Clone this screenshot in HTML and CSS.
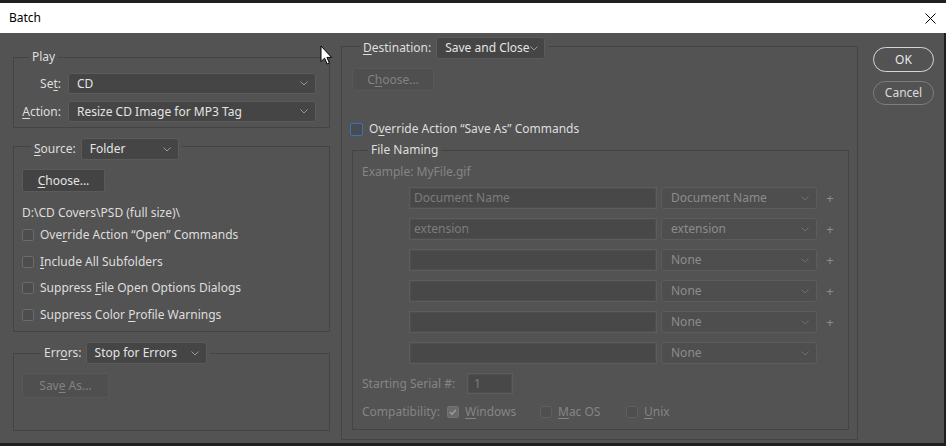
FILE: index.html
```html
<!DOCTYPE html>
<html>
<head>
<meta charset="utf-8">
<link rel="stylesheet" href="styles.css">
</head>
<body>
<div class="topstrip"></div>
<div class="titlebar">
  <span class="title">Batch</span>
  <svg class="close" width="11" height="11" viewBox="0 0 11 11"><path d="M0.5 0.5 L10.5 10.5 M10.5 0.5 L0.5 10.5"/></svg>
</div>
<div class="main">
  <div class="col-left">
    <fieldset class="group play">
      <legend class="lg-play">Play</legend>
      <div class="playgrid">
        <span class="lbl">Se<u>t</u>:</span>
        <div class="select w-play"><span>CD</span><svg class="chev" width="8" height="5" viewBox="0 0 8 5"><path d="M0.5 0.5 L4 4 L7.5 0.5"/></svg></div>
        <span class="lbl"><u>A</u>ction:</span>
        <div class="select w-play"><span>Resize CD Image for MP3 Tag</span><svg class="chev" width="8" height="5" viewBox="0 0 8 5"><path d="M0.5 0.5 L4 4 L7.5 0.5"/></svg></div>
      </div>
    </fieldset>

    <fieldset class="group source">
      <legend class="lg-source"><span class="lg-lbl"><u>S</u>ource:</span><div class="select w-source"><span>Folder</span><svg class="chev" width="8" height="5" viewBox="0 0 8 5"><path d="M0.5 0.5 L4 4 L7.5 0.5"/></svg></div></legend>
      <div class="btn w-choose"><span><u>C</u>hoose...</span></div>
      <div class="path">D:\CD Covers\PSD (full size)\</div>
      <div class="chk-row r1"><span class="cb"></span><span>Ove<u>r</u>ride Action “Open” Commands</span></div>
      <div class="chk-row r2"><span class="cb"></span><span><u>I</u>nclude All Subfolders</span></div>
      <div class="chk-row r3"><span class="cb"></span><span>Suppress <u>F</u>ile Open Options Dialogs</span></div>
      <div class="chk-row r4"><span class="cb"></span><span>Suppress Color <u>P</u>rofile Warnings</span></div>
    </fieldset>

    <fieldset class="group errors">
      <legend class="lg-errors"><span class="lg-lbl">Err<u>o</u>rs:</span><div class="select w-errors"><span>Stop for Errors</span><svg class="chev" width="8" height="5" viewBox="0 0 8 5"><path d="M0.5 0.5 L4 4 L7.5 0.5"/></svg></div></legend>
      <div class="btn disabled w-saveas"><span>Sav<u>e</u> As...</span></div>
    </fieldset>
  </div>

  <div class="col-right">
    <fieldset class="group dest">
      <legend class="lg-dest"><span class="lg-lbl"><u>D</u>estination:</span><div class="select w-dest"><span>Save and Close</span><svg class="chev" width="8" height="5" viewBox="0 0 8 5"><path d="M0.5 0.5 L4 4 L7.5 0.5"/></svg></div></legend>
      <div class="btn disabled w-choose2"><span>C<u>h</u>oose...</span></div>
      <div class="chk-row override"><span class="cb blue"></span><span>O<u>v</u>erride Action “Save As” Commands</span></div>

      <fieldset class="group naming">
        <legend class="lg-naming">File Naming</legend>
        <div class="example">Example: MyFile.gif</div>
        <div class="fn-row first"><div class="tinput">Document Name</div><div class="select dis w-fn"><span>Document Name</span><svg class="chev" width="8" height="5" viewBox="0 0 8 5"><path d="M0.5 0.5 L4 4 L7.5 0.5"/></svg></div><span class="plus">+</span></div>
        <div class="fn-row"><div class="tinput">extension</div><div class="select dis w-fn"><span>extension</span><svg class="chev" width="8" height="5" viewBox="0 0 8 5"><path d="M0.5 0.5 L4 4 L7.5 0.5"/></svg></div><span class="plus">+</span></div>
        <div class="fn-row"><div class="tinput"></div><div class="select dis w-fn"><span>None</span><svg class="chev" width="8" height="5" viewBox="0 0 8 5"><path d="M0.5 0.5 L4 4 L7.5 0.5"/></svg></div><span class="plus">+</span></div>
        <div class="fn-row"><div class="tinput"></div><div class="select dis w-fn"><span>None</span><svg class="chev" width="8" height="5" viewBox="0 0 8 5"><path d="M0.5 0.5 L4 4 L7.5 0.5"/></svg></div><span class="plus">+</span></div>
        <div class="fn-row"><div class="tinput"></div><div class="select dis w-fn"><span>None</span><svg class="chev" width="8" height="5" viewBox="0 0 8 5"><path d="M0.5 0.5 L4 4 L7.5 0.5"/></svg></div><span class="plus">+</span></div>
        <div class="fn-row"><div class="tinput"></div><div class="select dis w-fn"><span>None</span><svg class="chev" width="8" height="5" viewBox="0 0 8 5"><path d="M0.5 0.5 L4 4 L7.5 0.5"/></svg></div><span class="plus"></span></div>
        <div class="serial-row"><span class="serial-lbl">Starting Serial #:</span><div class="tinput small">1</div></div>
        <div class="compat-row">
          <span class="compat-lbl">Compatibility:</span>
          <span class="citem i1"><span class="cb dis checked"><svg width="10" height="10" viewBox="0 0 10 10"><path d="M2 5 L4 7.2 L8 2.8"/></svg></span><span><u>W</u>indows</span></span>
          <span class="citem i2"><span class="cb dis"></span><span><u>M</u>ac OS</span></span>
          <span class="citem i3"><span class="cb dis"></span><span><u>U</u>nix</span></span>
        </div>
      </fieldset>
    </fieldset>
  </div>

  <div class="col-buttons">
    <div class="pill ok">OK</div>
    <div class="pill cancel">Cancel</div>
  </div>

  <svg class="cursor" width="14" height="21" viewBox="0 0 14 21"><path d="M1 1 L1 16.5 L4.6 13.2 L7.2 19 L9.4 18 L6.9 12.4 L11.6 12.4 Z"/></svg>
</div>
</body>
</html>
```

FILE: styles.css
```css
* { box-sizing: border-box; }
html, body { margin: 0; padding: 0; }
body {
  width: 946px;
  height: 446px;
  overflow: hidden;
  background: #1f1f1f;
  font-family: "Noto Sans", "Open Sans", sans-serif;
  font-size: 12px;
  line-height: 16px;
}
u { text-decoration: underline; text-underline-offset: 2px; }

.topstrip { height: 3px; }
.titlebar {
  height: 30px;
  background: #ffffff;
  color: #000;
  display: flex;
  align-items: center;
  justify-content: space-between;
  padding: 0 10px 0 9px;
}
.title { font-size: 12px; }
.close path { stroke: #000; stroke-width: 1; fill: none; }

.main {
  position: relative;
  width: 944px;
  height: 410px;
  background: #535353;
  color: #dedede;
  display: flex;
  align-items: flex-start;
}

.group {
  margin: 0;
  border: 1px solid #444444;
  min-width: 0;
}
legend { line-height: 16px; }
.lg-lbl { white-space: nowrap; }

/* selects */
.select {
  height: 22px;
  background: #454545;
  border: 1px solid #5b5b5b;
  border-radius: 3px;
  display: flex;
  align-items: center;
  justify-content: space-between;
  padding: 0 7px 0 8px;
  color: #e4e4e4;
  white-space: nowrap;
}
.chev path { stroke: #9a9a9a; stroke-width: 1; fill: none; }
.select.dis { background: #4e4e4e; border-color: #5c5c5c; color: #8c8c8c; padding-left: 9px; }
.select.dis .chev path { stroke: #6e6e6e; }

/* buttons */
.btn {
  height: 23px;
  background: #434343;
  border: 1px solid #5a5a5a;
  border-radius: 2px;
  display: flex;
  align-items: center;
  justify-content: center;
  color: #e4e4e4;
  white-space: nowrap;
}
.btn.disabled { background: #4f4f4f; border-color: #585858; color: #828282; }

/* checkbox */
.chk-row { display: flex; align-items: center; height: 16px; white-space: nowrap; }
.cb {
  width: 12px;
  height: 12px;
  flex: none;
  border: 1px solid #6b6b6b;
  background: #4d4d4d;
  border-radius: 2px;
  margin-right: 6px;
  display: inline-flex;
  align-items: center;
  justify-content: center;
}
.cb.blue { width: 13px; height: 13px; border-color: #4070b3; background: #474b52; margin-right: 6px; }
.cb.dis { border-color: #5f5f5f; background: #4f4f4f; }
.cb.checked { background: #6a6a6a; border-color: #737373; }
.cb.checked path { stroke: #9c9c9c; stroke-width: 1.5; fill: none; }

/* left column */
.col-left { width: 317px; margin-left: 13px; margin-top: 16px; display: flex; flex-direction: column; }

.play { padding: 8px 12px 5px 8px; }
.lg-play { margin-left: 7px; padding: 0 3px; }
.playgrid {
  display: grid;
  grid-template-columns: 39px 248px;
  column-gap: 7px;
  row-gap: 7px;
  align-items: center;
}
.playgrid .select { height: 21px; }
.lbl { text-align: right; white-space: nowrap; }

.source { margin-top: 5px; padding: 9px 12px 8px 8px; }
.lg-source { margin-left: 9px; padding: 5px 3px 0 3px; display: flex; align-items: center; }
.lg-source .lg-lbl { margin-right: 5px; }
.w-source { width: 98px; }
.w-choose { width: 83px; }
.path { margin-top: 13px; height: 16px; white-space: nowrap; }
.r1 { margin-top: 6px; }
.r2 { margin-top: 11px; }
.r3 { margin-top: 10px; }
.r4 { margin-top: 11px; }

.errors { margin-top: 10px; padding: 9px 12px 32px 8px; }
.lg-errors { margin-left: 19px; padding: 0 3px; display: flex; align-items: center; }
.lg-errors .lg-lbl { margin-right: 4px; }
.w-errors { width: 121px; }
.w-saveas { width: 87px; height: 25px; }

/* right column */
.col-right { width: 517px; margin-left: 11px; }
.dest { padding: 9px 8px 9px 9px; }
.lg-dest { margin-left: 9px; padding: 4px 3px 0 3px; display: flex; align-items: center; }
.lg-dest .lg-lbl { margin-right: 5px; }
.w-dest { width: 109px; padding-right: 6px; }
.w-choose2 { width: 82px; margin-left: 1px; }
.override { margin-top: 30px; margin-left: -1px; }

.naming { margin-top: 5px; margin-left: 1px; padding: 6px 0 9px 9px; }
.lg-naming { margin-left: 6px; padding: 0 3px; }
.example { color: #858585; height: 16px; }
.fn-row { display: flex; align-items: center; margin-top: 9px; padding-left: 47px; }
.fn-row.first { margin-top: 7px; }
.tinput {
  width: 248px;
  height: 22px;
  background: #484848;
  border: 1px solid #5c5c5c;
  box-shadow: inset 0 0 0 1px #4e4e4e;
  color: #7c7c7c;
  padding-left: 4px;
  display: flex;
  align-items: center;
  white-space: nowrap;
}
.w-fn { width: 156px; margin-left: 4px; }
.plus { width: 18px; margin-left: 4px; text-align: center; color: #8c8c8c; font-size: 13px; }

.serial-row { display: flex; align-items: center; margin-top: 9px; color: #858585; }
.serial-lbl { width: 105px; white-space: nowrap; }
.tinput.small { width: 46px; height: 21px; padding-left: 6px; }

.compat-row { display: flex; align-items: center; margin-top: 10px; height: 16px; color: #858585; white-space: nowrap; }
.compat-lbl { width: 85px; }
.citem { display: flex; align-items: center; }
.i1 { width: 93px; }
.i2 { width: 86px; }

/* buttons column */
.col-buttons { margin-left: 15px; margin-top: 14px; width: 61px; display: flex; flex-direction: column; }
.pill {
  display: flex;
  align-items: center;
  justify-content: center;
  border-radius: 13px;
  color: #e8e8e8;
}
.ok { height: 25px; border: 1.5px solid #d6d6d6; }
.cancel { height: 24px; margin-top: 9px; border: 1px solid #7d7d7d; color: #dcdcdc; }

.cursor { position: absolute; left: 320px; top: 12px; }
.cursor path { fill: #fff; stroke: #000; stroke-width: 1; stroke-linejoin: miter; }
```
